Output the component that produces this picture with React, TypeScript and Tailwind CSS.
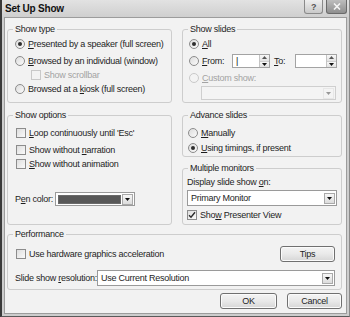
import React from "react"

// small helpers for the Vista-style controls
const Radio = ({ on = false, off = false }: { on?: boolean; off?: boolean }) => (
  <span
    className={`flex h-[10px] w-[10px] shrink-0 items-center justify-center rounded-full border ${
      off ? "border-[#c9c9c9] bg-[#f3f3f3]" : "border-[#8c8c8c] bg-gradient-to-br from-[#dcdcdc] to-[#fbfbfb]"
    }`}
  >
    {on && <span className="h-[4px] w-[4px] rounded-full bg-[#2e2e2e]" />}
  </span>
)

const Check = ({ on = false, off = false }: { on?: boolean; off?: boolean }) => (
  <span
    className={`flex h-[10px] w-[10px] shrink-0 items-center justify-center border ${
      off ? "border-[#c9c9c9] bg-[#f3f3f3]" : "border-[#8c8c8c] bg-gradient-to-br from-[#dedede] to-[#fafafa]"
    }`}
  >
    {on && (
      <svg width="8" height="8" viewBox="0 0 8 8">
        <path d="M1 4.2l2 2L7 1.3" fill="none" stroke="#2a2a2a" strokeWidth="1.4" />
      </svg>
    )}
  </span>
)

const Arrow = () => (
  <svg width="5" height="3" viewBox="0 0 5 3">
    <path d="M0 0h5L2.5 3z" fill="#111" />
  </svg>
)

const DropBtn = ({ off = false }: { off?: boolean }) => (
  <span
    className={`mr-[1px] flex h-[11px] w-[11px] shrink-0 items-center justify-center border ${
      off ? "border-[#d6d6d6] bg-[#f4f4f4] opacity-40" : "border-[#a9a9a9] bg-gradient-to-b from-[#f7f7f7] to-[#dcdcdc]"
    }`}
  >
    <Arrow />
  </span>
)

const Select = ({ text = "", className = "", off = false }: { text?: string; className?: string; off?: boolean }) => (
  <div
    className={`flex items-center border ${off ? "border-[#cfcfcf] bg-[#f4f4f4]" : "border-[#9a9a9a] bg-white"} ${className}`}
  >
    <span className="flex-1 truncate pl-[3px]">{text}</span>
    <DropBtn off={off} />
  </div>
)

const Spin = ({ caret = false, className = "" }: { caret?: boolean; className?: string }) => (
  <div className={`flex h-[14px] border border-[#a3a3a3] bg-white ${className}`}>
    <span className="flex-1 pl-[3px] leading-[12px] text-[#111]">{caret ? "|" : ""}</span>
    <div className="flex w-[10px] flex-col border-l border-[#c4c4c4]">
      <span className="flex flex-1 items-center justify-center bg-gradient-to-b from-[#f8f8f8] to-[#e2e2e2]">
        <svg width="5" height="3" viewBox="0 0 5 3">
          <path d="M0 3h5L2.5 0z" fill="#555" />
        </svg>
      </span>
      <span className="flex flex-1 items-center justify-center border-t border-[#cfcfcf] bg-gradient-to-b from-[#f8f8f8] to-[#e2e2e2]">
        <Arrow />
      </span>
    </div>
  </div>
)

const Btn = ({ children, className = "" }: { children: React.ReactNode; className?: string }) => (
  <button
    className={`flex items-center justify-center rounded-[3px] border border-[#707070] bg-gradient-to-b from-[#f4f4f4] via-[#e9e9e9] to-[#d6d6d6] text-[#1e1e1e] shadow-[inset_0_0_0_1px_#fbfbfb] ${className}`}
  >
    {children}
  </button>
)

const Group = ({ title, className = "", children }: { title: string; className?: string; children: React.ReactNode }) => (
  <fieldset className={`rounded-[3px] border border-[#cdcdcd] ${className}`}>
    <legend className="ml-[5px] px-[2px] leading-[12px]">{title}</legend>
    {children}
  </fieldset>
)

export default function App() {
  return (
    <div className="flex h-[317px] w-[350px] flex-col border-b border-l-2 border-r border-b-[#5a5a5a] border-l-[#3a3a3a] border-r-[#8a8a8a] bg-[#cdcdcd] font-['Liberation_Sans',Arial,sans-serif] text-[9px] leading-[12px] tracking-[-0.25px] text-[#1e1e1e]">
      {/* title bar */}
      <div className="flex h-[17px] shrink-0 items-start justify-between bg-gradient-to-b from-[#e2e2e2] to-[#cfcfcf] pl-[3px] pr-[2px]">
        <span className="mt-[3px] text-[10px] font-bold tracking-[-0.2px] text-[#111]">Set Up Show</span>
        <div className="flex gap-[3px]">
          <span className="flex h-[14px] w-[19px] items-center justify-center rounded-b-[3px] border border-t-0 border-[#8a8a8a] bg-gradient-to-b from-[#eeeeee] to-[#c9c9c9] text-[9px] font-bold text-[#555]">
            ?
          </span>
          <span className="flex h-[14px] w-[21px] items-center justify-center rounded-b-[3px] border border-t-0 border-[#6a6a6a] bg-gradient-to-b from-[#bdbdbd] to-[#8f8f8f]">
            <svg width="8" height="7" viewBox="0 0 8 7">
              <path d="M1 0.5l6 6M7 0.5l-6 6" stroke="#f4f4f4" strokeWidth="1.6" />
            </svg>
          </span>
        </div>
      </div>

      {/* body */}
      <div className="mx-[2px] mb-[2px] flex flex-1 flex-col border border-[#9c9c9c] bg-[#f2f2f2] pl-[2px] pr-[4px] pt-[5px]">
        {/* row 1 */}
        <div className="flex gap-[10px]">
          <Group title="Show type" className="h-[80px] w-[165px]">
            <div className="flex flex-col pl-[7px]">
              <div className="mt-[2px] flex h-[14px] items-center gap-[3px]">
                <Radio on />
                <span>
                  <u>P</u>resented by a speaker (full screen)
                </span>
              </div>
              <div className="mt-[3px] flex h-[14px] items-center gap-[3px]">
                <Radio />
                <span>
                  <u>B</u>rowsed by an individual (window)
                </span>
              </div>
              <div className="ml-[16px] flex h-[14px] items-center gap-[3px] text-[#a3a3a3]">
                <Check off />
                <span>Show scrollbar</span>
              </div>
              <div className="flex h-[14px] items-center gap-[3px]">
                <Radio />
                <span>
                  Browsed at a <u>k</u>iosk (full screen)
                </span>
              </div>
            </div>
          </Group>

          <Group title="Show slides" className="h-[80px] w-[160px]">
            <div className="flex flex-col pl-[6px]">
              <div className="mt-[2px] flex h-[14px] items-center gap-[3px]">
                <Radio on />
                <span>
                  <u>A</u>ll
                </span>
              </div>
              <div className="mt-[3px] flex h-[14px] items-center">
                <Radio />
                <span className="ml-[3px] w-[30px]">
                  <u>F</u>rom:
                </span>
                <Spin caret className="w-[38px]" />
                <span className="ml-[4px] w-[21px]">
                  <u>T</u>o:
                </span>
                <Spin className="w-[42px]" />
              </div>
              <div className="mt-[3px] flex h-[14px] items-center gap-[3px] text-[#a3a3a3]">
                <Radio off />
                <span>
                  <u>C</u>ustom show:
                </span>
              </div>
              <Select off className="ml-[12px] mt-[1px] h-[14px] w-[135px]" />
            </div>
          </Group>
        </div>

        {/* row 2 */}
        <div className="mt-[6px] flex gap-[10px]">
          <Group title="Show options" className="h-[116px] w-[165px]">
            <div className="flex flex-col pl-[8px]">
              <div className="mt-[5px] flex h-[14px] items-center gap-[3px]">
                <Check />
                <span>
                  <u>L</u>oop continuously until 'Esc'
                </span>
              </div>
              <div className="mt-[3px] flex h-[14px] items-center gap-[3px]">
                <Check />
                <span>
                  Show without <u>n</u>arration
                </span>
              </div>
              <div className="flex h-[14px] items-center gap-[3px]">
                <Check />
                <span>
                  <u>S</u>how without animation
                </span>
              </div>
              <div className="mt-[21px] flex h-[14px] items-center">
                <span className="ml-[-1px] w-[40px]">
                  P<u>e</u>n color:
                </span>
                <div className="flex h-[14px] w-[80px] items-center border border-[#9a9a9a] bg-white">
                  <span className="ml-[2px] h-[9px] w-[63px] border border-[#6a6a6a] bg-[#585858]" />
                  <span className="flex-1" />
                  <DropBtn />
                </div>
              </div>
            </div>
          </Group>

          <div className="flex w-[160px] flex-col gap-[5px]">
            <Group title="Advance slides" className="h-[48px]">
              <div className="flex flex-col pl-[5px]">
                <div className="mt-[5px] flex h-[14px] items-center gap-[3px]">
                  <Radio />
                  <span>
                    <u>M</u>anually
                  </span>
                </div>
                <div className="mt-[1px] flex h-[14px] items-center gap-[3px]">
                  <Radio on />
                  <span>
                    <u>U</u>sing timings, if present
                  </span>
                </div>
              </div>
            </Group>
            <Group title="Multiple monitors" className="h-[63px]">
              <div className="flex flex-col pl-[4px] pr-[4px]">
                <span className="mt-[2px] h-[12px]">
                  Display slide show <u>o</u>n:
                </span>
                <Select text="Primary Monitor" className="mt-[2px] h-[16px]" />
                <div className="mt-[2px] flex h-[14px] items-center gap-[3px]">
                  <Check on />
                  <span>
                    Sho<u>w</u> Presenter View
                  </span>
                </div>
              </div>
            </Group>
          </div>
        </div>

        {/* performance */}
        <Group title="Performance" className="mt-[3px] h-[62px]">
          <div className="flex flex-col pl-[8px] pr-[6px]">
            <div className="mt-[6px] flex h-[16px] items-center justify-between">
              <div className="flex items-center gap-[3px]">
                <Check />
                <span>Use hardware graphics acceleration</span>
              </div>
              <Btn className="h-[16px] w-[55px]">Tips</Btn>
            </div>
            <div className="mt-[8px] flex h-[16px] items-center">
              <span className="ml-[-1px] w-[82px] shrink-0 whitespace-nowrap">
                Slide show <u>r</u>esolution:
              </span>
              <Select text="Use Current Resolution" className="h-[16px] flex-1" />
            </div>
          </div>
        </Group>

        {/* dialog buttons */}
        <div className="mt-[3px] flex justify-end gap-[10px]">
          <Btn className="h-[16px] w-[57px]">OK</Btn>
          <Btn className="h-[16px] w-[55px]">Cancel</Btn>
        </div>
      </div>
    </div>
  )
}
